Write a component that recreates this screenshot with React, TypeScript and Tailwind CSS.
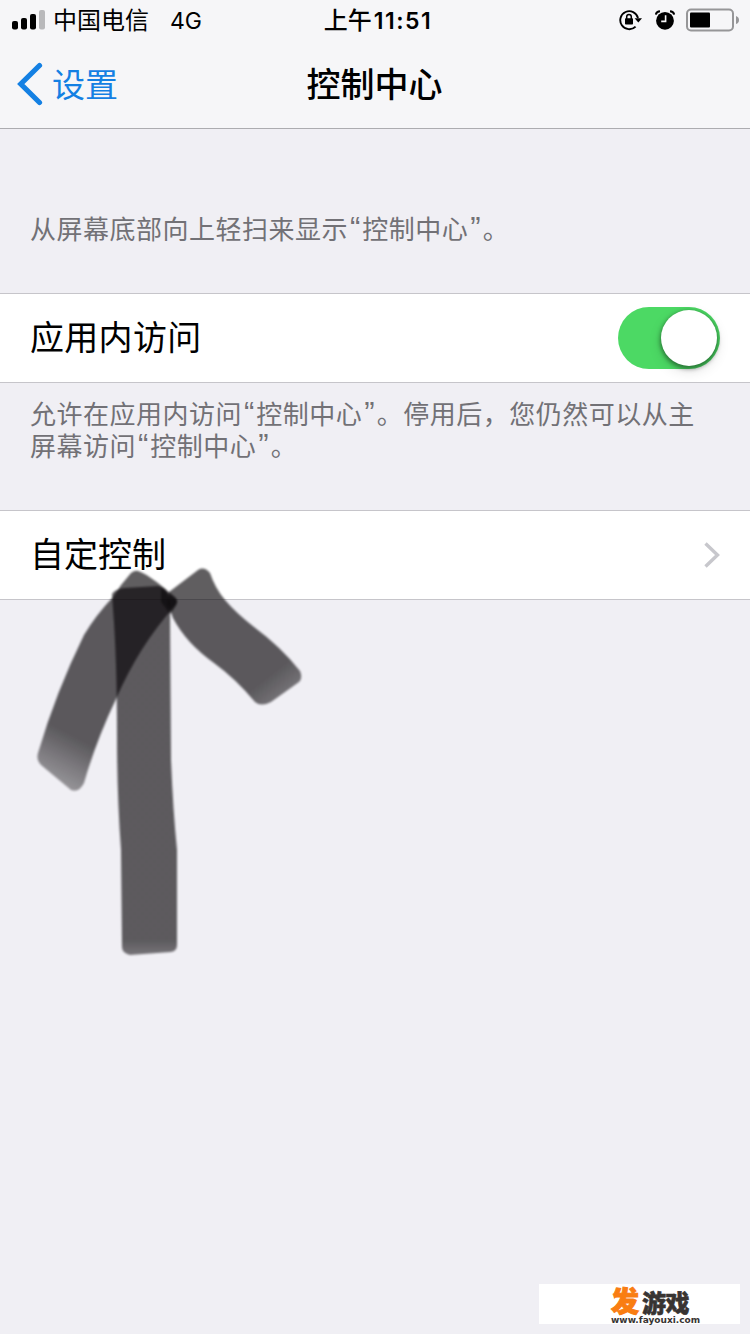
import React from "react";

function SignalBars() {
  return (
    <svg width="34" height="22" viewBox="0 0 34 22" aria-hidden="true">
      <rect x="1" y="12" width="6" height="8.5" rx="2" fill="#000" />
      <rect x="10" y="9" width="6" height="11.5" rx="2" fill="#000" />
      <rect x="19" y="5" width="6" height="15.5" rx="2" fill="#000" />
      <rect x="28" y="1" width="6" height="19.5" rx="2" fill="#b9b9bb" />
    </svg>
  );
}

function RotationLock() {
  return (
    <svg width="24" height="22" viewBox="0 0 24 22" fill="none" aria-hidden="true">
      <path d="M16.6 17.6A9 9 0 1 1 19 9" stroke="#000" strokeWidth="1.9" />
      <path d="M15.6 9.2h7.4l-3.7 4.4z" fill="#000" />
      <rect x="6" y="9.3" width="8" height="6.3" rx="0.8" fill="#000" />
      <path d="M7.7 10V7.8a2.3 2.3 0 0 1 4.6 0V10" stroke="#000" strokeWidth="1.5" />
    </svg>
  );
}

function AlarmClock() {
  return (
    <svg width="20" height="20" viewBox="0 0 20 20" fill="none" aria-hidden="true">
      <circle cx="10" cy="10.8" r="8.9" fill="#000" />
      <path d="M10.6 5.2v6.2H6.2" stroke="#f7f7f8" strokeWidth="1.6" />
      <path d="M0.8 4.6Q1.4 1.5 5 1.2M15 1.2q3.6.3 4.2 3.4" stroke="#000" strokeWidth="2" />
    </svg>
  );
}

function Battery() {
  return (
    <svg width="53" height="24" viewBox="0 0 53 24" fill="none" aria-hidden="true">
      <rect x="1" y="1.5" width="46" height="21" rx="4" stroke="#969698" strokeWidth="2" />
      <rect x="4" y="4.5" width="20" height="15" rx="1" fill="#000" />
      <path d="M50 8q3 1 3 4t-3 4z" fill="#969698" />
    </svg>
  );
}

function Header() {
  return (
    <header className="h-[129px] border-b border-[#acacb0] bg-[#f6f6f8]">
      <div className="grid h-10 grid-cols-[1fr_auto_1fr] items-center pl-[11px] pr-[11px] text-[24px] leading-[38px]">
        <div className="flex items-center">
          <SignalBars />
          <span className="ml-2 pt-0.5">中国电信</span>
          <span className="ml-[21px] pt-0.5 text-[23px]">4G</span>
        </div>
        <div className="pl-1.5 pt-0.5 font-medium">
          上午<span className="pl-0.5 text-[23px] font-semibold tracking-[1.5px]">11:51</span>
        </div>
        <div className="flex items-center justify-end">
          <RotationLock />
          <span className="ml-3 mr-[11px]">
            <AlarmClock />
          </span>
          <Battery />
        </div>
      </div>
      <div className="grid h-[88px] grid-cols-[1fr_auto_1fr] items-center pl-[17px] pr-[18px] text-[34px]">
        <button className="flex items-center text-[33px] text-[#1480e3]">
          <svg width="26" height="44" viewBox="0 0 26 44" fill="none" aria-hidden="true">
            <path d="M22.5 3.5 3.8 22 22.5 40.5" stroke="currentColor" strokeWidth="5.2" strokeLinecap="round" />
          </svg>
          <span className="ml-[9px] pt-[3px]">设置</span>
        </button>
        <h1 className="font-medium">控制中心</h1>
        <span />
      </div>
    </header>
  );
}

function Toggle() {
  return (
    <div
      role="switch"
      aria-checked="true"
      className="flex h-[62px] w-[102px] items-center justify-end rounded-full bg-[#4cd964] pr-[3px]"
    >
      <div className="size-[56px] rounded-full bg-white shadow-[0_2px_4px_1px_rgba(0,0,0,0.4),0_5px_14px_rgba(0,0,0,0.12)]" />
    </div>
  );
}

function Quoted({ children }: { children: string }) {
  return (
    <>
      <span className="pl-[2px] font-['Liberation_Sans'] text-[31px] leading-[0] tracking-[2px]">“</span>
      {children}
      <span className="pl-[2px] font-['Liberation_Sans'] text-[31px] leading-[0] tracking-[2px]">”</span>
    </>
  );
}

function BrushArrow() {
  return (
    <svg
      className="pointer-events-none absolute left-0 top-[560px]"
      width="320"
      height="410"
      viewBox="0 560 320 410"
      aria-hidden="true"
    >
      <defs>
        <filter id="soft" x="-10%" y="-10%" width="120%" height="120%" colorInterpolationFilters="sRGB">
          <feGaussianBlur stdDeviation="1.2" />
        </filter>
        <linearGradient id="left" gradientUnits="userSpaceOnUse" x1="55" y1="782" x2="78" y2="738">
          <stop offset="0" stopColor="#060306" stopOpacity="0.38" />
          <stop offset="1" stopColor="#060306" stopOpacity="0.64" />
        </linearGradient>
        <linearGradient id="right" gradientUnits="userSpaceOnUse" x1="284" y1="693" x2="270" y2="675">
          <stop offset="0" stopColor="#060306" stopOpacity="0.53" />
          <stop offset="1" stopColor="#060306" stopOpacity="0.64" />
        </linearGradient>
        <linearGradient id="stem" gradientUnits="userSpaceOnUse" x1="0" y1="954" x2="0" y2="940">
          <stop offset="0" stopColor="#060306" stopOpacity="0.52" />
          <stop offset="1" stopColor="#060306" stopOpacity="0.63" />
        </linearGradient>
      </defs>
      <g filter="url(#soft)">
        <path
          fill="url(#left)"
          d="M138 571Q143 572 158 583L175 597Q180 602 174 607Q139 646 116 699Q96 741 84 783Q79 793 71 790L41 765Q36 760 38 753Q56 692 84 635Q96 615 113 597Q121 584 131 573Q135 570 138 571Z"
        />
        <path
          fill="url(#stem)"
          d="M112 594Q115 589 124 588L158 586Q166 587 168 594Q170 603 170 615L171 760Q173 810 177 850L177 945Q177 951 171 952L130 955Q122 953 122 947L121 850Q117 795 117 735Q117 660 113 609Z"
        />
        <path
          fill="url(#right)"
          d="M169 592L198 570Q204 566 210 573Q215 588 225 600Q236 613 254 627Q281 647 300 671Q303 678 299 682L271 702Q261 707 255 702Q236 679 214 663Q186 643 173 618L168 604Z"
        />
        <path fill="#060306" fillOpacity="0.5" d="M161 588L177 600Q178 605 170 614L161 602Z" />
      </g>
    </svg>
  );
}

function Watermark() {
  return (
    <div className="absolute left-[539px] top-[1284px] flex h-10 w-[201px] flex-col bg-white pl-[72px] text-[#383432]">
      <div className="flex h-[31px] items-center pt-[5px] font-black leading-none">
        <span className="text-[28px] leading-[24px] text-[#f97d12] [-webkit-text-stroke:1px_#f97d12]">发</span>
        <span className="ml-[3px] pt-[3px] text-[24px] leading-[22px] tracking-[-0.4px] [-webkit-text-stroke:0.6px_#383432]">
          游戏
        </span>
      </div>
      <div className="pt-px font-['DejaVu_Sans'] text-[9px] font-bold leading-[8px]">www.fayouxi.com</div>
    </div>
  );
}

export default function App() {
  return (
    <div className="relative h-[1334px] w-[750px] overflow-hidden bg-[#f0eff4] font-['Inter','Noto_Sans_CJK_SC',sans-serif] text-black">
      <Header />
      <main>
        <p className="h-[164px] pl-[30px] pt-[85px] text-[26px] leading-8 tracking-[0.5px] text-[#727176]">
          从屏幕底部向上轻扫来显示<Quoted>控制中心</Quoted>。
        </p>
        <section className="flex h-[90px] items-center justify-between border-y border-[#c6c5ca] bg-white px-[30px] text-[34px] tracking-[0.3px]">
          <span className="pb-px">应用内访问</span>
          <Toggle />
        </section>
        <p className="h-[127px] pl-[30px] pt-4 text-[26px] leading-8 tracking-[0.5px] text-[#727176]">
          允许在应用内访问<Quoted>控制中心</Quoted>。停用后，您仍然可以从主
          <br />
          屏幕访问<Quoted>控制中心</Quoted>。
        </p>
        <section className="flex h-[90px] items-center justify-between border-y border-[#c6c5ca] bg-white px-[30px] text-[34px]">
          <span className="pb-px">自定控制</span>
          <svg width="18" height="28" viewBox="0 0 18 28" fill="none" aria-hidden="true">
            <path d="M3.5 2.5 15.5 14 3.5 25.5" stroke="#c7c7cc" strokeWidth="3.4" />
          </svg>
        </section>
      </main>
      <BrushArrow />
      <Watermark />
    </div>
  );
}
